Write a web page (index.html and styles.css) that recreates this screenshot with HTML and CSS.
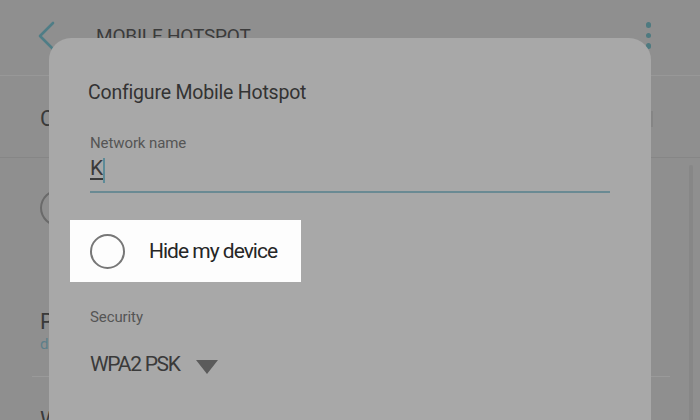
FILE: index.html
```html
<!DOCTYPE html>
<html>
<head>
<meta charset="utf-8">
<link rel="stylesheet" href="styles.css">
</head>
<body>
<div class="screen">
  <div class="page">
    <header class="topbar">
      <svg class="back" width="22" height="32" viewBox="0 0 22 32"><path d="M17 3 L4 16 L17 29" fill="none" stroke="#4f7d86" stroke-width="2.6" stroke-linecap="round" stroke-linejoin="round"/></svg>
      <span class="title">MOBILE HOTSPOT</span>
      <span class="menu"><i></i><i></i><i></i></span>
    </header>
    <div class="row row-on">
      <span class="row-text">Connected</span>
      <span class="switch"></span>
    </div>
    <div class="row row-icon">
      <span class="ring"></span>
    </div>
    <div class="row row-pass">
      <span class="row-text">Password</span>
      <span class="row-sub">d3f8a1c9</span>
    </div>
    <div class="row row-last">
      <span class="row-text">Wi-Fi sharing</span>
    </div>
    <span class="scrollbar"></span>
  </div>

  <div class="dialog">
    <h1 class="dlg-title">Configure Mobile Hotspot</h1>
    <div class="field">
      <label class="label">Network name</label>
      <div class="input"><span class="typed">K</span><span class="caret"></span></div>
    </div>
    <div class="check-box">
      <span class="radio"></span>
      <span class="check-text">Hide my device</span>
    </div>
    <div class="field security">
      <label class="label">Security</label>
      <div class="select"><span>WPA2 PSK</span><span class="tri"></span></div>
    </div>
  </div>
</div>
</body>
</html>
```
FILE: styles.css
```css
* { box-sizing: border-box; }
html, body { margin: 0; padding: 0; }
body {
  width: 700px;
  height: 420px;
  overflow: hidden;
  background: #8e8e8e;
  font-family: Roboto, "Noto Sans", sans-serif;
}
.screen {
  position: relative;
  width: 700px;
  height: 420px;
  overflow: hidden;
}
.page {
  position: relative;
  height: 420px;
  background: #8f8f8f;
}
.topbar {
  height: 76px;
  display: flex;
  align-items: flex-start;
  padding: 20px 0 0 36px;
  border-bottom: 1px solid #989898;
}
.back { display: block; }
.title {
  margin-left: 38px;
  margin-top: 4px;
  font-size: 19px;
  letter-spacing: -0.2px;
  color: #3b3b3b;
}
.menu {
  margin-left: auto;
  margin-right: 49px;
  margin-top: 2px;
  display: flex;
  flex-direction: column;
  gap: 5px;
}
.menu i {
  display: block;
  width: 5.5px;
  height: 5.5px;
  border-radius: 50%;
  background: #4e7a80;
}
.row {
  display: flex;
  padding-left: 40px;
}
.row-text { font-size: 22px; color: #3a3a3a; line-height: 26px; }
.row-on {
  height: 82px;
  align-items: center;
  border-bottom: 1px solid #868686;
  padding-right: 40px;
  padding-top: 4px;
}
.switch {
  margin-left: auto;
  width: 16px;
  height: 16px;
  border-right: 2px solid #858585;
  margin-right: 7px;
}
.row-icon {
  height: 132px;
  padding-top: 31px;
}
.ring {
  width: 40px;
  height: 38px;
  border: 2px solid #6a6a6a;
  border-radius: 50%;
}
.row-pass {
  flex-direction: column;
  height: 87px;
  margin-left: 32px;
  padding-left: 8px;
  padding-top: 19px;
  margin-right: 30px;
  border-bottom: 1px solid #9a9a9a;
}
.row-sub { font-size: 15px; line-height: 18px; color: #5d7f8a; }
.row-last { padding-top: 30px; }
.scrollbar {
  position: absolute;
  right: 7px;
  top: 165px;
  width: 4px;
  height: 260px;
  background: #878787;
  border-radius: 2px;
}
.dialog {
  position: absolute;
  left: 49px;
  top: 38px;
  width: 602px;
  height: 420px;
  background: #a8a8a8;
  border-radius: 22px 22px 0 0;
  padding: 41px 41px 0 41px;
}
.dlg-title {
  margin: 0 0 0 -2px;
  font-size: 19.5px;
  letter-spacing: -0.2px;
  font-weight: normal;
  color: #333;
  line-height: 28px;
}
.field { display: flex; flex-direction: column; }
.label {
  font-size: 15px;
  color: #555;
  margin-top: 26px;
  line-height: 20px;
  letter-spacing: -0.1px;
}
.input {
  display: flex;
  align-items: flex-start;
  height: 40px;
  border-bottom: 2px solid #6a8a93;
  width: 520px;
  padding-top: 2px;
}
.typed {
  font-size: 21px;
  line-height: 26px;
  color: #3a3a3a;
  text-decoration: underline;
  text-underline-offset: 3px;
  text-decoration-thickness: 1.5px;
}
.caret {
  width: 2px;
  height: 25px;
  background: #5d8b98;
  margin-top: 3px;
}
.check-box {
  display: flex;
  align-items: center;
  width: 231px;
  height: 62px;
  background: #fdfdfd;
  margin-left: -20px;
  margin-top: 27px;
  padding-left: 20px;
}
.radio {
  width: 35px;
  height: 35px;
  border: 2px solid #777;
  border-radius: 50%;
  flex: none;
}
.check-text {
  margin-left: 24px;
  font-size: 21px;
  letter-spacing: -1px;
  color: #262626;
}
.security .label { margin-top: 25px; }
.select {
  display: flex;
  align-items: center;
  margin-top: 23px;
  font-size: 21px;
  line-height: 28px;
  letter-spacing: -1.3px;
  color: #3a3a3a;
}
.tri {
  width: 0;
  height: 0;
  border-left: 11px solid transparent;
  border-right: 11px solid transparent;
  border-top: 14px solid #5b5b5b;
  margin-left: 16px;
  margin-top: 5px;
}
```
